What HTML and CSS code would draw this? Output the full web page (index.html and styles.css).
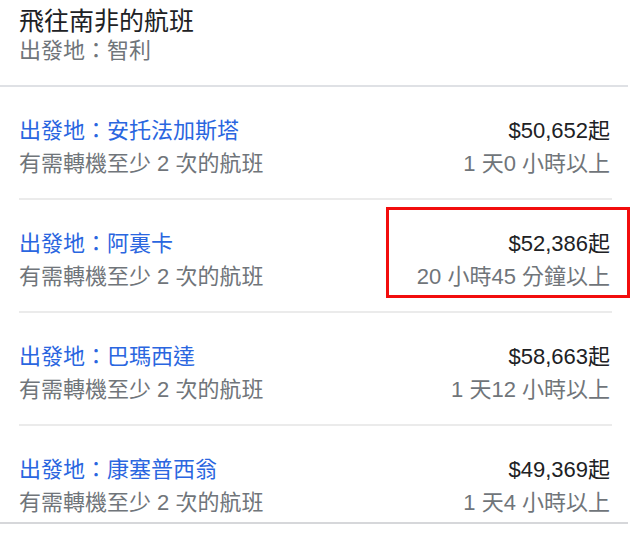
FILE: index.html
```html
<!DOCTYPE html>
<html lang="zh-Hant">
<head>
    <meta charset="UTF-8">
    <meta name="viewport" content="width=device-width, initial-scale=1.0">
    <title>飛往南非的航班</title>
    <link rel="stylesheet" href="styles.css">
</head>
<body>
    <div class="card">
        <!-- Header -->
        <div class="card-head">
            <div class="title">飛往南非的航班</div>
            <div class="subtitle">出發地：智利</div>
        </div>

        <!-- Flight rows -->
        <div class="row">
            <div class="col">
                <a class="origin" href="#">出發地：安托法加斯塔</a>
                <span class="muted">有需轉機至少 2 次的航班</span>
            </div>
            <div class="col right">
                <span class="price">$50,652起</span>
                <span class="muted">1 天0 小時以上</span>
            </div>
        </div>

        <div class="row">
            <div class="col">
                <a class="origin" href="#">出發地：阿裏卡</a>
                <span class="muted">有需轉機至少 2 次的航班</span>
            </div>
            <div class="col right">
                <span class="price">$52,386起</span>
                <span class="muted">20 小時45 分鐘以上</span>
            </div>
            <div class="highlight"></div>
        </div>

        <div class="row">
            <div class="col">
                <a class="origin" href="#">出發地：巴瑪西達</a>
                <span class="muted">有需轉機至少 2 次的航班</span>
            </div>
            <div class="col right">
                <span class="price">$58,663起</span>
                <span class="muted">1 天12 小時以上</span>
            </div>
        </div>

        <div class="row">
            <div class="col">
                <a class="origin" href="#">出發地：康塞普西翁</a>
                <span class="muted">有需轉機至少 2 次的航班</span>
            </div>
            <div class="col right">
                <span class="price">$49,369起</span>
                <span class="muted">1 天4 小時以上</span>
            </div>
        </div>
    </div>
</body>
</html>
```

FILE: styles.css
```css
body {
    margin: 0;
    background: #fff;
    font-family: "Liberation Sans", "Noto Sans CJK TC", Arial, sans-serif;
    color: #202124;
}
.card {
    width: 628px;
    border-bottom: 2px solid #d6d7da;
}
.card-head {
    padding: 6px 19px 19px;
    border-bottom: 2px solid #dfe1e5;
}
.title {
    font-size: 25px;
    line-height: 30px;
    color: #202124;
}
.subtitle {
    font-size: 22px;
    line-height: 30px;
    color: #70757a;
}
.row {
    position: relative;
    display: flex;
    justify-content: space-between;
    margin: 0 16px 0 19px;
    padding: 27px 2px 18px 0;
    border-bottom: 2px solid #ebebeb;
}
.row:last-child {
    padding-bottom: 3px;
    border-bottom: none;
}
.col {
    display: flex;
    flex-direction: column;
    font-size: 22px;
    line-height: 33px;
}
.col.right {
    align-items: flex-end;
}
.origin {
    color: #2a66e0;
    text-decoration: none;
}
.muted {
    color: #70757a;
}
.price {
    color: #202124;
}
.highlight {
    position: absolute;
    left: 367px;
    top: 7px;
    width: 238px;
    height: 85px;
    border: 3px solid #f20d0d;
}
```
